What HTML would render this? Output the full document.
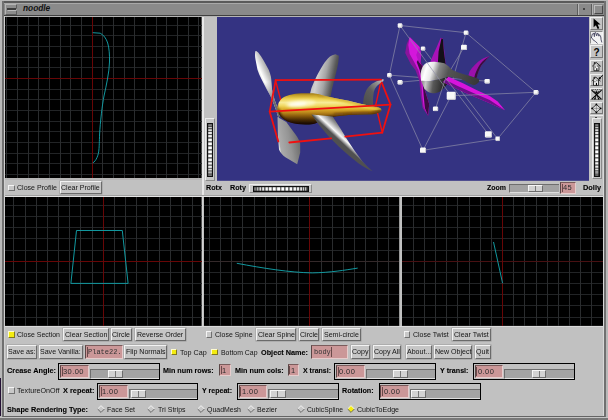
<!DOCTYPE html><html><head><meta charset="utf-8"><title>noodle</title><style>
html,body{margin:0;padding:0;overflow:hidden;}
body{width:608px;height:420px;overflow:hidden;background:#c1c1c1;position:relative;font-family:"Liberation Sans",sans-serif;font-size:7px;color:#000;}
div,span{position:absolute;box-sizing:border-box;white-space:nowrap;}
svg{position:absolute;display:block;}
.t{font-size:7.2px;line-height:8px;height:8px;color:#141414;}
.b{font-weight:bold;color:#000;-webkit-text-stroke:0.1px #000;}
.btn{background:#c6c6c6;border:1px solid;border-color:#f2f2f2 #6a6a6a #6a6a6a #f2f2f2;font-size:7.05px;line-height:11px;text-align:center;color:#141414;box-shadow:0 0 0 0.5px #9a9a9a;}
.bt{position:static;display:inline-block;transform:scale(1.0005);}
.fld{background:#cb9798;border:1px solid;border-color:#7a5c5c #e6cccc #e6cccc #5a4646;font-family:"Liberation Mono",monospace;font-size:7px;line-height:11px;color:#333;padding-left:2px;}
.fld.n{font-family:"Liberation Sans",sans-serif;font-size:7.5px;letter-spacing:0.42px;padding-left:2.4px;color:#2c2c2c;}
.chk{width:6.5px;height:6.5px;background:#c8c8c8;border:1px solid;border-color:#f4f4f4 #707070 #707070 #f4f4f4;}
.chk.y{background:#f4ec10;border-color:#fffbd0 #807820 #807820 #fffbd0;}
.box{border:1.3px solid #000;background:#c1c1c1;}
.trk{background:#a3a3a3;border-top:1px solid #6e6e6e;border-left:1px solid #6e6e6e;border-bottom:1px solid #dedede;}
.thm{background:#d2d2d2;border:1px solid;border-color:#f6f6f6 #6c6c6c #6c6c6c #f6f6f6;}
.thm i{position:absolute;left:50%;top:0;bottom:0;width:1px;background:#777;margin-left:-0.5px;}
</style></head><body><div style="left:0px;top:0px;width:608px;height:1px;background:#b8b8b8;"></div><div style="left:0px;top:1px;width:608px;height:2px;background:#5a5a5a;"></div><div style="left:0px;top:3px;width:608px;height:12px;background:#8a8a8a;"></div><div style="left:0px;top:3px;width:608px;height:1px;background:#a8a8a8;"></div><div style="left:0px;top:15px;width:608px;height:1px;background:#404040;"></div><div style="left:0px;top:16px;width:608px;height:1px;background:#b4b4b4;"></div><div style="left:0px;top:0px;width:1.5px;height:420px;background:#b8b8b8;"></div><div style="left:1.5px;top:1px;width:2.5px;height:419px;background:#707070;"></div><div style="left:4px;top:16px;width:1.3px;height:400px;background:#d0d0d0;"></div><div style="left:0px;top:378px;width:1px;height:38px;background:#241034;"></div><div style="left:603px;top:17px;width:1px;height:399px;background:#d8d8d8;"></div><div style="left:604px;top:1px;width:1.6px;height:417px;background:#707070;"></div><div style="left:605.6px;top:0px;width:2.4px;height:420px;background:#b8b8b8;"></div><div style="left:3px;top:415.5px;width:602px;height:1.5px;background:#646464;"></div><div style="left:0px;top:417px;width:608px;height:1px;background:#c4c4c4;"></div><div style="left:0px;top:418px;width:608px;height:2px;background:#787878;"></div><div style="left:4.5px;top:4px;width:12.5px;height:11px;background:#8c8c8c;border:1px solid;border-color:#b4b4b4 #5c5c5c #5c5c5c #b4b4b4;"></div><div style="left:6.5px;top:8px;width:9px;height:2px;background:#3c3c3c;box-shadow:0.6px 0.8px 0 #c8c8c8;"></div><div style="left:23px;top:3px;font:italic bold 8.3px/11px 'Liberation Sans',sans-serif;color:#101010;">noodle</div><div style="left:577.3px;top:4px;width:1px;height:11px;background:#5c5c5c;"></div><div style="left:578.3px;top:4px;width:1px;height:11px;background:#b4b4b4;"></div><div style="left:583px;top:8px;width:2.2px;height:2.2px;background:#2c2c2c;border-radius:1px;"></div><div style="left:590.5px;top:4px;width:1px;height:11px;background:#5c5c5c;"></div><div style="left:591.5px;top:4px;width:1px;height:11px;background:#b0b0b0;"></div><div style="left:594px;top:4.5px;width:8.5px;height:9px;background:#8c8c8c;border:1px solid;border-color:#bcbcbc #484848 #484848 #bcbcbc;"></div><svg style="left:5.3px;top:17px" width="196.6" height="161" viewBox="5.3 17 196.6 161"><rect x="5.3" y="17" width="196.6" height="161" fill="#000"/><path d="M5.3 25.10H201.9M5.3 35.78H201.9M5.3 46.46H201.9M5.3 57.14H201.9M5.3 67.82H201.9M5.3 89.18H201.9M5.3 99.86H201.9M5.3 110.54H201.9M5.3 121.22H201.9M5.3 131.90H201.9M5.3 142.58H201.9M5.3 153.26H201.9M5.3 163.94H201.9M5.3 174.62H201.9" stroke="#222426" stroke-width="1" fill="none" shape-rendering="crispEdges"/><path d="M7.06 17V178M17.74 17V178M28.42 17V178M39.10 17V178M49.78 17V178M60.46 17V178M71.14 17V178M81.82 17V178M103.18 17V178M113.86 17V178M124.54 17V178M135.22 17V178M145.90 17V178M156.58 17V178M167.26 17V178M177.94 17V178M188.62 17V178M199.30 17V178" stroke="#2a2c2e" stroke-width="1" fill="none" shape-rendering="crispEdges"/><path d="M5.3 78.5H201.9" stroke="#680606" stroke-width="1" shape-rendering="crispEdges"/><path d="M92.5 17V178" stroke="#680606" stroke-width="1" shape-rendering="crispEdges"/><path d="M93 32.7L100.5 33.2C104 35 106.5 38.5 108 43C109.5 48 110 55 109.8 62C109.6 72 106.5 86 104.3 96C102.5 105 100.6 122 99.9 134C99.6 142 99.6 146 99.2 150C98.8 155 96.5 161 93 163" stroke="#1299a0" stroke-width="1" fill="none" stroke-linejoin="round" shape-rendering="crispEdges"/></svg><svg style="left:5.3px;top:196.9px" width="196.6" height="128.9" viewBox="5.3 196.9 196.6 128.9"><rect x="5.3" y="196.9" width="196.6" height="128.9" fill="#000"/><path d="M5.3 205.35H201.9M5.3 216.52H201.9M5.3 227.69H201.9M5.3 238.86H201.9M5.3 250.03H201.9M5.3 272.37H201.9M5.3 283.54H201.9M5.3 294.71H201.9M5.3 305.88H201.9M5.3 317.05H201.9" stroke="#222426" stroke-width="1" fill="none" shape-rendering="crispEdges"/><path d="M14.24 196.9V325.8M25.41 196.9V325.8M36.58 196.9V325.8M47.75 196.9V325.8M58.92 196.9V325.8M70.09 196.9V325.8M81.26 196.9V325.8M92.43 196.9V325.8M114.77 196.9V325.8M125.94 196.9V325.8M137.11 196.9V325.8M148.28 196.9V325.8M159.45 196.9V325.8M170.62 196.9V325.8M181.79 196.9V325.8M192.96 196.9V325.8" stroke="#2a2c2e" stroke-width="1" fill="none" shape-rendering="crispEdges"/><path d="M5.3 261.2H201.9" stroke="#680606" stroke-width="1" shape-rendering="crispEdges"/><path d="M103.6 196.9V325.8" stroke="#680606" stroke-width="1" shape-rendering="crispEdges"/><path d="M76.8 230.4H122.6L128.4 283.3H71.2Z" stroke="#1299a0" stroke-width="1" fill="none" stroke-linejoin="round" shape-rendering="crispEdges"/></svg><svg style="left:203.7px;top:196.9px" width="195.6" height="128.9" viewBox="203.7 196.9 195.6 128.9"><rect x="203.7" y="196.9" width="195.6" height="128.9" fill="#000"/><path d="M203.7 205.35H399.3M203.7 216.52H399.3M203.7 227.69H399.3M203.7 238.86H399.3M203.7 250.03H399.3M203.7 272.37H399.3M203.7 283.54H399.3M203.7 294.71H399.3M203.7 305.88H399.3M203.7 317.05H399.3" stroke="#222426" stroke-width="1" fill="none" shape-rendering="crispEdges"/><path d="M209.17 196.9V325.8M220.34 196.9V325.8M231.51 196.9V325.8M242.68 196.9V325.8M253.85 196.9V325.8M265.02 196.9V325.8M276.19 196.9V325.8M287.36 196.9V325.8M298.53 196.9V325.8M320.87 196.9V325.8M332.04 196.9V325.8M343.21 196.9V325.8M354.38 196.9V325.8M365.55 196.9V325.8M376.72 196.9V325.8M387.89 196.9V325.8" stroke="#2a2c2e" stroke-width="1" fill="none" shape-rendering="crispEdges"/><path d="M203.7 261.2H399.3" stroke="#34292a" stroke-width="1" shape-rendering="crispEdges"/><path d="M309.7 196.9V325.8" stroke="#680606" stroke-width="1" shape-rendering="crispEdges"/><path d="M236.5 263.2C262 268 290 272.5 312 272.8C330 272.5 345 270 357.4 268" stroke="#1299a0" stroke-width="1" fill="none" stroke-linejoin="round" shape-rendering="crispEdges"/></svg><svg style="left:402px;top:196.9px" width="201" height="128.9" viewBox="402 196.9 201 128.9"><rect x="402" y="196.9" width="201" height="128.9" fill="#000"/><path d="M402 205.35H603M402 216.52H603M402 227.69H603M402 238.86H603M402 250.03H603M402 272.37H603M402 283.54H603M402 294.71H603M402 305.88H603M402 317.05H603" stroke="#222426" stroke-width="1" fill="none" shape-rendering="crispEdges"/><path d="M413.24 196.9V325.8M424.41 196.9V325.8M435.58 196.9V325.8M446.75 196.9V325.8M457.92 196.9V325.8M469.09 196.9V325.8M480.26 196.9V325.8M491.43 196.9V325.8M513.77 196.9V325.8M524.94 196.9V325.8M536.11 196.9V325.8M547.28 196.9V325.8M558.45 196.9V325.8M569.62 196.9V325.8M580.79 196.9V325.8M591.96 196.9V325.8" stroke="#2a2c2e" stroke-width="1" fill="none" shape-rendering="crispEdges"/><path d="M402 261.2H603" stroke="#481012" stroke-width="1" shape-rendering="crispEdges"/><path d="M502.6 196.9V325.8" stroke="#680606" stroke-width="1" shape-rendering="crispEdges"/><path d="M493.5 241.9L502.6 283.2" stroke="#1299a0" stroke-width="1" fill="none" stroke-linejoin="round" shape-rendering="crispEdges"/></svg><div style="left:202.3px;top:17px;width:1.7px;height:179px;background:#e8e8e8;"></div><div style="left:201.9px;top:196.9px;width:1px;height:128.9px;background:#d4d4d4;"></div><div style="left:399.3px;top:196.9px;width:1px;height:128.9px;background:#989898;"></div><div style="left:5px;top:194.9px;width:598px;height:1px;background:#a0a0a0;"></div><div style="left:5px;top:195.9px;width:598px;height:1px;background:#e4e4e4;"></div><div style="left:5px;top:325.8px;width:598px;height:1px;background:#dadada;"></div><div style="left:5px;top:178px;width:197px;height:1.5px;background:#b6b6b6;"></div><svg style="left:217.3px;top:17px" width="372" height="163.8" viewBox="217.3 17 372 163.8"><defs>
<linearGradient id="gb" x1="0" y1="0" x2="0.12" y2="1"><stop offset="0" stop-color="#d8a828"/><stop offset="0.12" stop-color="#f0cc40"/><stop offset="0.38" stop-color="#f8e070"/><stop offset="0.55" stop-color="#e0a820"/><stop offset="0.78" stop-color="#a06c10"/><stop offset="1" stop-color="#3c2404"/></linearGradient>
<radialGradient id="gh" cx="0.5" cy="0.5" r="0.5"><stop offset="0" stop-color="#fffff0" stop-opacity="0.95"/><stop offset="0.6" stop-color="#fff4a0" stop-opacity="0.5"/><stop offset="1" stop-color="#f8e070" stop-opacity="0"/></radialGradient>
<linearGradient id="f1" gradientUnits="userSpaceOnUse" x1="256" y1="72" x2="274" y2="64"><stop offset="0" stop-color="#d0d0d0"/><stop offset="0.22" stop-color="#ffffff"/><stop offset="0.5" stop-color="#c4c4c4"/><stop offset="0.8" stop-color="#8c8c8c"/><stop offset="1" stop-color="#6c6c6c"/></linearGradient>
<linearGradient id="f2" x1="0" y1="0.3" x2="1" y2="0.6"><stop offset="0" stop-color="#b0b0b0"/><stop offset="0.3" stop-color="#d0d0d0"/><stop offset="0.55" stop-color="#a4a4a4"/><stop offset="0.8" stop-color="#585858"/><stop offset="1" stop-color="#383838"/></linearGradient>
<linearGradient id="f3" x1="0.2" y1="1" x2="0.9" y2="0"><stop offset="0" stop-color="#4c4c4c"/><stop offset="0.5" stop-color="#5c5c5c"/><stop offset="0.8" stop-color="#909090"/><stop offset="1" stop-color="#c0c0c0"/></linearGradient>
<linearGradient id="f4" gradientUnits="userSpaceOnUse" x1="278" y1="140" x2="301" y2="136"><stop offset="0" stop-color="#ececec"/><stop offset="0.07" stop-color="#acacac"/><stop offset="0.5" stop-color="#949494"/><stop offset="1" stop-color="#646464"/></linearGradient>
<linearGradient id="f5" gradientUnits="userSpaceOnUse" x1="311.7" y1="114.5" x2="320.9" y2="104.6"><stop offset="0" stop-color="#505050"/><stop offset="0.1" stop-color="#8c8c8c"/><stop offset="0.3" stop-color="#f8f8f8"/><stop offset="0.5" stop-color="#c8c8c8"/><stop offset="0.75" stop-color="#8c8c8c"/><stop offset="1" stop-color="#5c5c5c"/></linearGradient>
<linearGradient id="pb" gradientUnits="userSpaceOnUse" x1="421" y1="66" x2="479" y2="84"><stop offset="0" stop-color="#c8c8c8"/><stop offset="0.1" stop-color="#ffffff"/><stop offset="0.2" stop-color="#e8e8e8"/><stop offset="0.3" stop-color="#868686"/><stop offset="0.46" stop-color="#545454"/><stop offset="1" stop-color="#363636"/></linearGradient><linearGradient id="pl" gradientUnits="userSpaceOnUse" x1="422" y1="84" x2="447" y2="88"><stop offset="0" stop-color="#909090"/><stop offset="0.15" stop-color="#c8c8c8"/><stop offset="0.45" stop-color="#585858"/><stop offset="1" stop-color="#181818"/></linearGradient>
<linearGradient id="pb2" x1="0" y1="0" x2="0" y2="1"><stop offset="0" stop-color="#000" stop-opacity="0"/><stop offset="0.55" stop-color="#000" stop-opacity="0"/><stop offset="1" stop-color="#000" stop-opacity="0.65"/></linearGradient>
<linearGradient id="p1" x1="0" y1="0" x2="1" y2="0"><stop offset="0" stop-color="#9018a8"/><stop offset="0.45" stop-color="#f418f4"/><stop offset="1" stop-color="#b814c8"/></linearGradient>
<linearGradient id="p4" x1="0" y1="0" x2="0.3" y2="1"><stop offset="0" stop-color="#e414e4"/><stop offset="0.55" stop-color="#d010d8"/><stop offset="1" stop-color="#500868"/></linearGradient>
<filter id="bl1" x="-20%" y="-50%" width="140%" height="200%"><feGaussianBlur stdDeviation="0.8"/></filter><filter id="bl2" x="-20%" y="-50%" width="140%" height="200%"><feGaussianBlur stdDeviation="1.4"/></filter><linearGradient id="f1b" gradientUnits="userSpaceOnUse" x1="0" y1="82" x2="0" y2="102"><stop offset="0" stop-color="#707070" stop-opacity="0"/><stop offset="1" stop-color="#6c6c6c" stop-opacity="1"/></linearGradient><linearGradient id="gb2" gradientUnits="userSpaceOnUse" x1="0" y1="93" x2="0" y2="125"><stop offset="0" stop-color="#987414"/><stop offset="0.08" stop-color="#c8a42c"/><stop offset="0.18" stop-color="#ecd050"/><stop offset="0.3" stop-color="#f8ec98"/><stop offset="0.4" stop-color="#f0d860"/><stop offset="0.5" stop-color="#dcb02c"/><stop offset="0.6" stop-color="#c08c1c"/><stop offset="0.72" stop-color="#885a0c"/><stop offset="0.85" stop-color="#442804"/><stop offset="1" stop-color="#100600"/></linearGradient></defs><rect x="217.3" y="17" width="372" height="163.8" fill="#343382"/><g stroke="#f01010" stroke-width="1.4" fill="none" stroke-linecap="round"><path d="M275.8 80.2L283.8 110.8M381.5 80L376 105.2L382.6 132.6"/></g><path d="M255.8 50.8C255 53.5 255.2 56.5 255.8 59.6L257.7 69.4C258.7 72.6 260 75.6 261.7 78.9L266.6 88.4L270.8 96L273.7 103L276.6 110.7L279 119L281 108L277.5 106.9L274.7 99.2L272.4 89.7L271.8 82.1C271.7 80 271.5 78.2 271.2 76.4C270.6 74 269.9 71.8 269 69.7L264.2 61.1C262.5 58 260.5 55 258.5 52.6C257.6 51.6 256.8 51 256 51Z" fill="url(#f1)"/><path d="M255.8 50.8C255 53.5 255.2 56.5 255.8 59.6L257.7 69.4C258.7 72.6 260 75.6 261.7 78.9L266.6 88.4L270.8 96L273.7 103L276.6 110.7L279 119L281 108L277.5 106.9L274.7 99.2L272.4 89.7L271.8 82.1C271.7 80 271.5 78.2 271.2 76.4C270.6 74 269.9 71.8 269 69.7L264.2 61.1C262.5 58 260.5 55 258.5 52.6C257.6 51.6 256.8 51 256 51Z" fill="url(#f1b)"/><path d="M335.8 54.2C333.5 54.8 331.5 55.5 330 56.7C327.5 59 325.5 61.5 323.3 65C320.5 69.5 318.5 73 316.7 76.7C314.5 81 313 85 311.7 88.3L310 95L330.8 97L332.5 88.3L335 78.3L337.5 68.3L338.7 61.7L339.2 55.8Z" fill="url(#f2)"/><path d="M383.8 79L378.3 80.8C375.5 82 373.5 83 371.7 84.2C369.5 86 368 88 366.7 90C365.5 92.3 364.8 94.5 364.2 96.7L363 105L373.3 107.5L373.3 100C373.5 96.5 373.7 94 374.2 91.7C375 89 376 87.2 377.5 85.8C379.3 84 381.5 82.5 383.8 81Z" fill="url(#f3)"/><path d="M277.8 117L278.2 134.6L279.3 149.4C280.5 152.5 283 155.2 285.7 157.3L297.5 164.2L300.5 152.4L300.5 143.5C299 139 296.5 135 293.6 131.6L286.6 122Z" fill="url(#f4)"/><clipPath id="bc"><path d="M277.9 106.7C278.3 103.5 279.8 101 281.8 98.8C284 96.8 286.5 95.7 289.7 94.9C293.5 94 297.5 93.5 301.6 93.3L313.4 93.3C317.5 93.8 321.5 94.8 325.3 95.9L337.1 98.4L348.9 100.8L360.8 103.7L372.6 106.3L379.5 107.7C381 108.2 381.8 108.9 381.7 109.9C381.5 111.2 380.7 112 379.5 112.6C377.5 113.5 375 114 372.6 114.2L360.8 114.6L348.9 115L337.1 116.2L329.2 117.6C324.5 119.5 320 121.8 315.4 123.5C313 124.2 310.2 124.5 307.5 124.5C304 124.6 300.8 124.4 297.6 124.1C294 123.5 290.8 122.7 287.8 121.5C285 120.2 282.7 118.6 280.9 116.6C279.5 115 278.7 113.3 278.3 111.6C278 110 277.8 108.3 277.9 106.7Z"/></clipPath><g clip-path="url(#bc)"><rect x="276" y="90" width="108" height="38" fill="url(#gb2)"/><path d="M325 97.5L337 100L360.8 105.2L381 109.3" stroke="#f0d850" stroke-width="2.6" fill="none" filter="url(#bl1)"/><path d="M318 95.4L337.1 98.6L360.8 103.9L381 108" stroke="#b88c1c" stroke-width="1.4" fill="none" filter="url(#bl1)"/><path d="M276.5 109C277.5 116.5 283 122.4 290 124.9C297 126.7 309 127 316 125.6C322 123.8 326 121.3 330 119.5L349 116.9L372.6 116.1L383 112" stroke="#140800" stroke-width="5" fill="none" filter="url(#bl2)"/><path d="M334 114.4L349 113.4L372 112.6L381 111.5" stroke="#7c4c08" stroke-width="2.4" fill="none" filter="url(#bl1)"/><path d="M277.5 100C277 104 277 110 278.5 115" stroke="#a87818" stroke-width="2.2" fill="none" filter="url(#bl1)"/><ellipse cx="301" cy="103.6" rx="15" ry="3.4" fill="#fffad0" opacity="0.8" filter="url(#bl2)" transform="rotate(-4 301 103.6)"/><ellipse cx="298" cy="104" rx="9" ry="1.7" fill="#ffffff" opacity="0.8" filter="url(#bl1)" transform="rotate(-5 298 104)"/></g><path d="M311.7 114.5L319.2 124.7L329 136.6L339 146.4L348.8 155.3L358.7 163.2C363 166.2 367.5 169 372.8 171.3C369 168 365.5 164.5 362.6 161.2L354.7 150.4L346.8 138.5L340.9 128.7L333 116.5Z" fill="url(#f5)"/><g stroke="#f01010" stroke-width="1.8" fill="none" stroke-linecap="round" stroke-linejoin="round"><path d="M276 80.1L381.3 79.7"/><path d="M276 80.1L270 111.7L278.6 141.5"/><path d="M382 82.5L390.8 104.6L382.6 132.6"/><path d="M270 111.7L390.8 104.6"/><path d="M289.6 142.5L331.5 138.4M345.6 136.7L382.6 132.6"/></g><path d="M453 80L466.3 32.7M453 80L497.9 138.8M453 80L389.6 75.1M400.3 25.5L466.3 32.7M466.3 32.7L536.3 92.3M389.6 75.1L400.3 25.5M446 78L423.3 48.5M446 78L464.3 47.3M446 78L400.3 82.2M446 78L487.5 81.2" stroke="#9090aa" stroke-width="0.68" fill="none"/><path d="M441 37.8L437 47L433 56L430 63.5L446 65L444.5 50L443 38.3Z" fill="#a812b8"/><path d="M441.8 38.3L438.9 51.4L438.1 64L446 65L444.2 51.4L443.2 39Z" fill="#141018"/><path d="M490 56C487 56.8 484.5 58 482 59.3C479.5 61 477.3 62.8 475.3 64.7C473 67 471.3 69 470 71.3L468.7 75.3L476.7 78.7L478 74C478.8 71.5 479.6 69.5 480.7 67.3C481.8 65.3 483 63.5 484.7 62C486.3 60 488 58 490 56Z" fill="#9c10ac"/><path d="M490 56C486 58.5 483 61 480.6 64C478.5 67 477 70 475.5 74L474.5 77.7L476.7 78.7L478 74C478.8 71.5 479.6 69.5 480.7 67.3C481.8 65.3 483 63.5 484.7 62C486.3 60 488 58 490 56Z" fill="#38103c"/><path d="M410 37L407 44L405.5 53L411 64L415.7 70L419.6 80.5L421 96.2L422.9 108L428.4 115.8L429.5 104L426.2 93.6L422.9 83.1L423 66L421 63L421.5 55L420 47Z" fill="#8a149c"/><path d="M410 37L408.6 45L410 54L414.5 62L418.6 70L421.4 80.5L422.6 96L424 107L428.4 115.8L429.5 104L426.2 93.6L422.9 83.1L423 66L421 63L421.5 55L420 47Z" fill="#d416dc"/><path d="M421.5 55L421.3 63L423 66L422.9 83.1L426.2 93.6L429.5 104L428.4 115.8L425.2 108L424 96L423 84L420 70L417 62Z" fill="#3c0c44"/><path d="M419.5 47L421.5 55L421 63L422.5 66L419 62L416.5 55Z" fill="#b414c4"/><path d="M421.3 80.7L424.7 88.7C426.5 91 429.5 92.8 432.7 93.3C435.5 93.4 438.3 92.8 440.7 91.3C442.8 89.8 444.6 88 446 86L448.7 82L448.7 76.7L440.7 78.7L430 81.3Z" fill="url(#pl)"/><path d="M421.3 80.7L420.9 74C421.2 71.5 421.8 69.2 422.7 67.3C423.8 65 425.3 63.5 427.3 62.7C430 61.8 433.5 61.6 436.7 62C439.5 62.2 442.3 62.6 444.7 63.3C447.5 65 450.2 67.6 452.7 70C456 71.6 459.7 73 463.3 74L472.7 76.7L478.7 78.7C479.5 79.7 479.6 80.9 479.3 82C478 83.5 476.2 84.6 474 85.3L468.7 83.3L460.7 78.7L448.7 76.7L440.7 78.7L430 81.3Z" fill="url(#pb)"/><path d="M448.7 76.7L463.3 83.3L476.7 90L490 96L498 101.5L505.3 110.2L490 103.3L470 94.7L456.7 88.7L443.3 82Z" fill="#d814dc"/><path d="M446 80L458 86L472 92.2L490 100L505.3 110.2L490 103.3L470 94.7L456.7 88.7L443.3 82Z" fill="#6c1088"/><path d="M451.5 95.8L400.3 25.5M451.5 95.8L536.3 92.3M451.5 95.8L423.3 150.3M536.3 92.3L497.9 138.8M497.9 138.8L423.3 150.3M423.3 150.3L389.6 75.1M446 78L435.8 108.8M446 78L488.7 134.3" stroke="#9090aa" stroke-width="0.68" fill="none"/><rect x="398" y="23.3" width="4.6" height="4.4" rx="1.2" fill="#f8f8f8"/><path d="M398.8 27.25H402.15V24.3" stroke="#c4c4cc" stroke-width="0.9" fill="none"/><rect x="464" y="30.5" width="4.6" height="4.4" rx="1.2" fill="#f8f8f8"/><path d="M464.8 34.45H468.15V31.5" stroke="#c4c4cc" stroke-width="0.9" fill="none"/><rect x="533.9" y="90.1" width="4.8" height="4.4" rx="1.2" fill="#f8f8f8"/><path d="M534.7 94.05H538.25V91.1" stroke="#c4c4cc" stroke-width="0.9" fill="none"/><rect x="495.7" y="136.6" width="4.4" height="4.4" rx="1.2" fill="#f8f8f8"/><path d="M496.5 140.55H499.65V137.6" stroke="#c4c4cc" stroke-width="0.9" fill="none"/><rect x="420.3" y="147.6" width="6" height="5.4" rx="1.2" fill="#f8f8f8"/><path d="M421.1 152.55H425.85V148.6" stroke="#c4c4cc" stroke-width="0.9" fill="none"/><rect x="387.4" y="72.9" width="4.4" height="4.4" rx="1.2" fill="#f8f8f8"/><path d="M388.2 76.85H391.35V73.9" stroke="#c4c4cc" stroke-width="0.9" fill="none"/><rect x="447" y="91.8" width="9" height="8" rx="1.2" fill="#f8f8f8"/><path d="M447.8 99.35H455.55V92.8" stroke="#c4c4cc" stroke-width="0.9" fill="none"/><rect x="397.8" y="80" width="5" height="4.4" rx="1.2" fill="#f8f8f8"/><path d="M398.6 83.95H402.35V81" stroke="#c4c4cc" stroke-width="0.9" fill="none"/><rect x="421.1" y="46.5" width="4.4" height="4" rx="1.2" fill="#f8f8f8"/><path d="M421.9 50.05H425.05V47.5" stroke="#c4c4cc" stroke-width="0.9" fill="none"/><rect x="461.3" y="44.7" width="6" height="5.2" rx="1.2" fill="#f8f8f8"/><path d="M462.1 49.45H466.85V45.7" stroke="#c4c4cc" stroke-width="0.9" fill="none"/><rect x="484.8" y="79" width="5.4" height="4.4" rx="1.2" fill="#f8f8f8"/><path d="M485.6 82.95H489.75V80" stroke="#c4c4cc" stroke-width="0.9" fill="none"/><rect x="433.2" y="106.5" width="5.2" height="4.6" rx="1.2" fill="#f8f8f8"/><path d="M434 110.65H437.95V107.5" stroke="#c4c4cc" stroke-width="0.9" fill="none"/><rect x="485.2" y="131.2" width="7" height="6.2" rx="1.2" fill="#f8f8f8"/><path d="M486 136.95H491.75V132.2" stroke="#c4c4cc" stroke-width="0.9" fill="none"/></svg><div style="left:205px;top:118.2px;width:9.9px;height:62.4px;background:#c8c8c8;border:1px solid;border-color:#ececec #8a8a8a #8a8a8a #ececec;"></div><svg style="left:207px;top:122.7px" width="6.1" height="54.1" viewBox="0 0 6.1 54.1" shape-rendering="crispEdges"><rect width="6.1" height="54.1" fill="#101010"/><rect x="1.2" y="1.34" width="3.70" height="0.65" fill="#a9a9a9" shape-rendering="auto"/><rect x="1.2" y="2.00" width="3.70" height="0.37" fill="#323232" shape-rendering="auto"/><rect x="1.2" y="2.37" width="3.70" height="1.08" fill="#bebebe" shape-rendering="auto"/><rect x="1.2" y="3.45" width="3.70" height="0.55" fill="#3f3f3f" shape-rendering="auto"/><rect x="1.2" y="4.00" width="3.70" height="1.48" fill="#d0d0d0" shape-rendering="auto"/><rect x="1.2" y="5.49" width="3.70" height="0.72" fill="#4c4c4c" shape-rendering="auto"/><rect x="1.2" y="6.20" width="3.70" height="1.85" fill="#dedede" shape-rendering="auto"/><rect x="1.2" y="8.05" width="3.70" height="0.86" fill="#585858" shape-rendering="auto"/><rect x="1.2" y="8.92" width="3.70" height="2.17" fill="#ebebeb" shape-rendering="auto"/><rect x="1.2" y="11.09" width="3.70" height="0.99" fill="#626262" shape-rendering="auto"/><rect x="1.2" y="12.08" width="3.70" height="2.44" fill="#f4f4f4" shape-rendering="auto"/><rect x="1.2" y="14.51" width="3.70" height="1.09" fill="#6a6a6a" shape-rendering="auto"/><rect x="1.2" y="15.61" width="3.70" height="2.64" fill="#fcfcfc" shape-rendering="auto"/><rect x="1.2" y="18.25" width="3.70" height="1.17" fill="#707070" shape-rendering="auto"/><rect x="1.2" y="19.42" width="3.70" height="2.79" fill="#ffffff" shape-rendering="auto"/><rect x="1.2" y="22.20" width="3.70" height="1.21" fill="#757575" shape-rendering="auto"/><rect x="1.2" y="23.42" width="3.70" height="2.86" fill="#ffffff" shape-rendering="auto"/><rect x="1.2" y="26.28" width="3.70" height="1.23" fill="#777777" shape-rendering="auto"/><rect x="1.2" y="27.51" width="3.70" height="2.86" fill="#ffffff" shape-rendering="auto"/><rect x="1.2" y="30.37" width="3.70" height="1.22" fill="#777777" shape-rendering="auto"/><rect x="1.2" y="31.58" width="3.70" height="2.79" fill="#ffffff" shape-rendering="auto"/><rect x="1.2" y="34.38" width="3.70" height="1.17" fill="#757575" shape-rendering="auto"/><rect x="1.2" y="35.55" width="3.70" height="2.66" fill="#fcfcfc" shape-rendering="auto"/><rect x="1.2" y="38.21" width="3.70" height="1.10" fill="#717171" shape-rendering="auto"/><rect x="1.2" y="39.31" width="3.70" height="2.46" fill="#f5f5f5" shape-rendering="auto"/><rect x="1.2" y="41.76" width="3.70" height="1.00" fill="#6b6b6b" shape-rendering="auto"/><rect x="1.2" y="42.76" width="3.70" height="2.19" fill="#ebebeb" shape-rendering="auto"/><rect x="1.2" y="44.95" width="3.70" height="0.88" fill="#626262" shape-rendering="auto"/><rect x="1.2" y="45.83" width="3.70" height="1.88" fill="#e0e0e0" shape-rendering="auto"/><rect x="1.2" y="47.70" width="3.70" height="0.73" fill="#585858" shape-rendering="auto"/><rect x="1.2" y="48.43" width="3.70" height="1.51" fill="#d1d1d1" shape-rendering="auto"/><rect x="1.2" y="49.95" width="3.70" height="0.57" fill="#4d4d4d" shape-rendering="auto"/><rect x="1.2" y="50.51" width="3.70" height="1.11" fill="#c0c0c0" shape-rendering="auto"/><rect x="1.2" y="51.63" width="3.70" height="0.39" fill="#404040" shape-rendering="auto"/><rect x="1.2" y="52.01" width="3.70" height="0.69" fill="#ababab" shape-rendering="auto"/></svg><div style="left:592.1px;top:118.3px;width:9.7px;height:60.7px;background:#c8c8c8;border:1px solid;border-color:#ececec #8a8a8a #8a8a8a #ececec;"></div><svg style="left:594.1px;top:122.6px" width="5.6" height="54" viewBox="0 0 5.6 54" shape-rendering="crispEdges"><rect width="5.6" height="54" fill="#101010"/><rect x="1.2" y="1.34" width="3.20" height="0.65" fill="#a9a9a9" shape-rendering="auto"/><rect x="1.2" y="1.99" width="3.20" height="0.37" fill="#323232" shape-rendering="auto"/><rect x="1.2" y="2.37" width="3.20" height="1.08" fill="#bebebe" shape-rendering="auto"/><rect x="1.2" y="3.45" width="3.20" height="0.55" fill="#3f3f3f" shape-rendering="auto"/><rect x="1.2" y="4.00" width="3.20" height="1.48" fill="#d0d0d0" shape-rendering="auto"/><rect x="1.2" y="5.48" width="3.20" height="0.72" fill="#4c4c4c" shape-rendering="auto"/><rect x="1.2" y="6.19" width="3.20" height="1.85" fill="#dedede" shape-rendering="auto"/><rect x="1.2" y="8.04" width="3.20" height="0.86" fill="#585858" shape-rendering="auto"/><rect x="1.2" y="8.90" width="3.20" height="2.17" fill="#ebebeb" shape-rendering="auto"/><rect x="1.2" y="11.07" width="3.20" height="0.99" fill="#626262" shape-rendering="auto"/><rect x="1.2" y="12.06" width="3.20" height="2.43" fill="#f4f4f4" shape-rendering="auto"/><rect x="1.2" y="14.49" width="3.20" height="1.09" fill="#6a6a6a" shape-rendering="auto"/><rect x="1.2" y="15.58" width="3.20" height="2.64" fill="#fcfcfc" shape-rendering="auto"/><rect x="1.2" y="18.22" width="3.20" height="1.17" fill="#707070" shape-rendering="auto"/><rect x="1.2" y="19.38" width="3.20" height="2.78" fill="#ffffff" shape-rendering="auto"/><rect x="1.2" y="22.16" width="3.20" height="1.21" fill="#757575" shape-rendering="auto"/><rect x="1.2" y="23.37" width="3.20" height="2.85" fill="#ffffff" shape-rendering="auto"/><rect x="1.2" y="26.23" width="3.20" height="1.23" fill="#777777" shape-rendering="auto"/><rect x="1.2" y="27.45" width="3.20" height="2.86" fill="#ffffff" shape-rendering="auto"/><rect x="1.2" y="30.31" width="3.20" height="1.21" fill="#777777" shape-rendering="auto"/><rect x="1.2" y="31.52" width="3.20" height="2.79" fill="#ffffff" shape-rendering="auto"/><rect x="1.2" y="34.31" width="3.20" height="1.17" fill="#757575" shape-rendering="auto"/><rect x="1.2" y="35.48" width="3.20" height="2.65" fill="#fcfcfc" shape-rendering="auto"/><rect x="1.2" y="38.13" width="3.20" height="1.10" fill="#717171" shape-rendering="auto"/><rect x="1.2" y="39.23" width="3.20" height="2.45" fill="#f5f5f5" shape-rendering="auto"/><rect x="1.2" y="41.68" width="3.20" height="1.00" fill="#6b6b6b" shape-rendering="auto"/><rect x="1.2" y="42.68" width="3.20" height="2.19" fill="#ebebeb" shape-rendering="auto"/><rect x="1.2" y="44.87" width="3.20" height="0.87" fill="#626262" shape-rendering="auto"/><rect x="1.2" y="45.74" width="3.20" height="1.87" fill="#e0e0e0" shape-rendering="auto"/><rect x="1.2" y="47.61" width="3.20" height="0.73" fill="#585858" shape-rendering="auto"/><rect x="1.2" y="48.34" width="3.20" height="1.51" fill="#d1d1d1" shape-rendering="auto"/><rect x="1.2" y="49.85" width="3.20" height="0.56" fill="#4d4d4d" shape-rendering="auto"/><rect x="1.2" y="50.42" width="3.20" height="1.11" fill="#c0c0c0" shape-rendering="auto"/><rect x="1.2" y="51.53" width="3.20" height="0.39" fill="#404040" shape-rendering="auto"/><rect x="1.2" y="51.92" width="3.20" height="0.69" fill="#ababab" shape-rendering="auto"/></svg><div style="left:249px;top:184.1px;width:62.5px;height:8.8px;background:#c8c8c8;border:1px solid;border-color:#ececec #8a8a8a #8a8a8a #ececec;"></div><svg style="left:253.2px;top:185.7px" width="55.7" height="5.9" viewBox="0 0 55.7 5.9" shape-rendering="crispEdges"><rect width="55.7" height="5.9" fill="#101010"/><rect y="1.2" x="1.35" height="3.50" width="0.67" fill="#a9a9a9" shape-rendering="auto"/><rect y="1.2" x="2.02" height="3.50" width="0.38" fill="#323232" shape-rendering="auto"/><rect y="1.2" x="2.40" height="3.50" width="1.12" fill="#bebebe" shape-rendering="auto"/><rect y="1.2" x="3.52" height="3.50" width="0.57" fill="#3f3f3f" shape-rendering="auto"/><rect y="1.2" x="4.09" height="3.50" width="1.53" fill="#d0d0d0" shape-rendering="auto"/><rect y="1.2" x="5.62" height="3.50" width="0.74" fill="#4c4c4c" shape-rendering="auto"/><rect y="1.2" x="6.36" height="3.50" width="1.91" fill="#dedede" shape-rendering="auto"/><rect y="1.2" x="8.26" height="3.50" width="0.89" fill="#585858" shape-rendering="auto"/><rect y="1.2" x="9.16" height="3.50" width="2.24" fill="#ebebeb" shape-rendering="auto"/><rect y="1.2" x="11.39" height="3.50" width="1.02" fill="#626262" shape-rendering="auto"/><rect y="1.2" x="12.41" height="3.50" width="2.51" fill="#f4f4f4" shape-rendering="auto"/><rect y="1.2" x="14.93" height="3.50" width="1.13" fill="#6a6a6a" shape-rendering="auto"/><rect y="1.2" x="16.05" height="3.50" width="2.73" fill="#fcfcfc" shape-rendering="auto"/><rect y="1.2" x="18.78" height="3.50" width="1.20" fill="#707070" shape-rendering="auto"/><rect y="1.2" x="19.98" height="3.50" width="2.87" fill="#ffffff" shape-rendering="auto"/><rect y="1.2" x="22.85" height="3.50" width="1.25" fill="#757575" shape-rendering="auto"/><rect y="1.2" x="24.10" height="3.50" width="2.95" fill="#ffffff" shape-rendering="auto"/><rect y="1.2" x="27.05" height="3.50" width="1.27" fill="#777777" shape-rendering="auto"/><rect y="1.2" x="28.32" height="3.50" width="2.95" fill="#ffffff" shape-rendering="auto"/><rect y="1.2" x="31.27" height="3.50" width="1.25" fill="#777777" shape-rendering="auto"/><rect y="1.2" x="32.52" height="3.50" width="2.88" fill="#ffffff" shape-rendering="auto"/><rect y="1.2" x="35.40" height="3.50" width="1.21" fill="#757575" shape-rendering="auto"/><rect y="1.2" x="36.61" height="3.50" width="2.74" fill="#fcfcfc" shape-rendering="auto"/><rect y="1.2" x="39.35" height="3.50" width="1.13" fill="#717171" shape-rendering="auto"/><rect y="1.2" x="40.48" height="3.50" width="2.53" fill="#f5f5f5" shape-rendering="auto"/><rect y="1.2" x="43.02" height="3.50" width="1.03" fill="#6b6b6b" shape-rendering="auto"/><rect y="1.2" x="44.05" height="3.50" width="2.26" fill="#ebebeb" shape-rendering="auto"/><rect y="1.2" x="46.31" height="3.50" width="0.90" fill="#626262" shape-rendering="auto"/><rect y="1.2" x="47.21" height="3.50" width="1.93" fill="#e0e0e0" shape-rendering="auto"/><rect y="1.2" x="49.14" height="3.50" width="0.75" fill="#585858" shape-rendering="auto"/><rect y="1.2" x="49.89" height="3.50" width="1.56" fill="#d1d1d1" shape-rendering="auto"/><rect y="1.2" x="51.46" height="3.50" width="0.58" fill="#4d4d4d" shape-rendering="auto"/><rect y="1.2" x="52.04" height="3.50" width="1.15" fill="#c0c0c0" shape-rendering="auto"/><rect y="1.2" x="53.19" height="3.50" width="0.40" fill="#404040" shape-rendering="auto"/><rect y="1.2" x="53.59" height="3.50" width="0.71" fill="#ababab" shape-rendering="auto"/></svg><div style="left:589.8px;top:115.1px;width:13.2px;height:0.9px;background:#ececec;"></div><div style="left:594.8px;top:116.8px;width:2.4px;height:1px;background:#404040;"></div><div style="left:589.8px;top:17.4px;width:13.2px;height:12.8px;background:#c4c4c4;border:1px solid;border-color:#f0f0f0 #787878 #787878 #f0f0f0;"></div><svg style="left:589.8px;top:17.4px" width="13.2" height="12.8" viewBox="0 0 13.2 12.8"><path d="M3.6 1.6L3.6 10.2L5.9 8.2L7.7 12L9.3 11.3L7.6 7.6L10.6 7.4Z" fill="#000"/></svg><div style="left:589.8px;top:31.3px;width:13.2px;height:12.8px;background:#eeeeee;border:1px solid;border-color:#8a8a8a #f4f4f4 #f4f4f4 #8a8a8a;"></div><svg style="left:589.8px;top:31.3px" width="13.2" height="12.8" viewBox="0 0 13.2 12.8"><path d="M1.5 6.5L2.3 3.1L3.8 2.3L4.4 5.6L4.6 2L5.6 1.5L6.6 4.6L7.2 2.4L8.2 2.6L8.8 5L9.4 3.8L10.2 4.4L10.8 6L11.1 8.8L11.8 11.1L7.3 12.2L5.3 10.3L3 8.8Z" fill="#f4f4f4" stroke="none"/><path d="M1.5 6.5L2.3 3.1L3.8 2.3L4.4 5.6M4.6 4.4L4.6 2L5.6 1.5L6.6 4.6M7 4.2L7.2 2.4L8.2 2.6L8.8 5M9.2 4.6L9.4 3.8L10.2 4.4L10.8 6L11.1 8.8L11.8 11.1M1.5 6.5L3 8.8L5.3 10.3L7.3 12.2" fill="none" stroke="#30304c" stroke-width="0.8" stroke-linejoin="round" stroke-linecap="round"/></svg><div style="left:589.8px;top:45.4px;width:13.2px;height:12.8px;background:#c4c4c4;border:1px solid;border-color:#f0f0f0 #787878 #787878 #f0f0f0;"></div><svg style="left:589.8px;top:45.4px" width="13.2" height="12.8" viewBox="0 0 13.2 12.8"><text x="6.6" y="10.6" font-family="Liberation Sans,sans-serif" font-weight="bold" font-size="10" text-anchor="middle" fill="#000">?</text></svg><div style="left:589.8px;top:59.7px;width:13.2px;height:12.8px;background:#c4c4c4;border:1px solid;border-color:#f0f0f0 #787878 #787878 #f0f0f0;"></div><svg style="left:589.8px;top:59.7px" width="13.2" height="12.8" viewBox="0 0 13.2 12.8"><path d="M3.9 5.8V10.7H8.9V5.4Z" fill="#f0f0f0"/><path d="M2.2 6.3L6.2 2.4L10.9 6.5M3.9 5.4V10.7H8.9V5.2M4.3 4.2V2.5H5.1V3.4" fill="none" stroke="#000" stroke-width="0.75"/><rect x="6.3" y="8.2" width="1.1" height="2.4" fill="#000"/><rect x="4.9" y="6.6" width="0.9" height="0.9" fill="#000"/><rect x="6.9" y="5.6" width="0.9" height="0.9" fill="#000"/></svg><div style="left:589.8px;top:73.6px;width:13.2px;height:12.8px;background:#c4c4c4;border:1px solid;border-color:#f0f0f0 #787878 #787878 #f0f0f0;"></div><svg style="left:589.8px;top:73.6px" width="13.2" height="12.8" viewBox="0 0 13.2 12.8"><g transform="translate(-0.4,0.7)"><path d="M3.9 5.8V10.7H8.9V5.4Z" fill="#f0f0f0"/><path d="M2.2 6.3L6.2 2.4L10.9 6.5M3.9 5.4V10.7H8.9V5.2M4.3 4.2V2.5H5.1V3.4" fill="none" stroke="#000" stroke-width="0.75"/><rect x="6.3" y="8.2" width="1.1" height="2.4" fill="#000"/><rect x="4.9" y="6.6" width="0.9" height="0.9" fill="#000"/><rect x="6.9" y="5.6" width="0.9" height="0.9" fill="#000"/></g><path d="M12.6 1.2L9.4 4.6" stroke="#000" stroke-width="1" fill="none"/><path d="M8.6 5.6L9 2.8L11.2 5Z" fill="#000"/></svg><div style="left:589.8px;top:87.6px;width:13.2px;height:12.8px;background:#c4c4c4;border:1px solid;border-color:#f0f0f0 #787878 #787878 #f0f0f0;"></div><svg style="left:589.8px;top:87.6px" width="13.2" height="12.8" viewBox="0 0 13.2 12.8"><path d="M1.6 2.2L11.4 11.2M11.6 2.2L1.8 11.2" stroke="#000" stroke-width="1.1" fill="none"/><path d="M6.6 5L6.6 2.6M4.6 3L6.2 6M8.6 3L7 6M4.8 11.4L6 7.6M8.8 11.4L7.2 7.6" stroke="#000" stroke-width="0.8" fill="none"/><path d="M1.6 1.6H11.6" stroke="#000" stroke-width="0.7" stroke-dasharray="0.9 0.9" fill="none"/><circle cx="5" cy="10.8" r="0.8" fill="#000"/><circle cx="8.6" cy="10.8" r="0.8" fill="#000"/><circle cx="6.6" cy="4.6" r="0.8" fill="#000"/></svg><div style="left:589.8px;top:101.6px;width:13.2px;height:12.8px;background:#c4c4c4;border:1px solid;border-color:#f0f0f0 #787878 #787878 #f0f0f0;"></div><svg style="left:589.8px;top:101.6px" width="13.2" height="12.8" viewBox="0 0 13.2 12.8"><path d="M6.4 2.5L10.7 6.4L6.4 10.4L2.1 6.4Z" fill="#dcdcdc" stroke="#000" stroke-width="0.7"/><path d="M6.4 2.5V10.4M2.1 6.4H10.7" stroke="#666" stroke-width="0.5"/><circle cx="6.4" cy="2.4" r="0.9" fill="#000"/><circle cx="10.7" cy="6.4" r="0.9" fill="#000"/><circle cx="6.4" cy="10.4" r="0.9" fill="#000"/><circle cx="2.1" cy="6.4" r="0.9" fill="#000"/></svg><div class="chk" style="left:8px;top:184.6px;"></div><div class="t" style="left:16.8px;top:184.3px;transform-origin:0 0;transform:scaleX(0.9816);">Close Profile</div><div class="btn" style="left:60px;top:181px;width:41.7px;height:13px;line-height:11px;"><span class="bt">Clear Profile</span></div><div class="t b" style="left:206px;top:184.3px;transform-origin:0 0;transform:scaleX(1.0010);">Rotx</div><div class="t b" style="left:230px;top:184.3px;transform-origin:0 0;transform:scaleX(1.0010);">Roty</div><div class="t b" style="left:487px;top:184.3px;transform-origin:0 0;transform:scaleX(0.9712);">Zoom</div><div class="t b" style="left:583.4px;top:184.3px;transform-origin:0 0;transform:scaleX(1.0297);">Dolly</div><div class="trk" style="left:509px;top:183.6px;width:50px;height:9.3px;"></div><div class="thm" style="left:528.4px;top:184.6px;width:14.6px;height:7.6px;"><i></i></div><div class="fld n" style="left:560px;top:181.6px;width:15.8px;height:12px;line-height:10.5px;"><span class="bt">45</span><i style="position:absolute;left:1.4px;top:1px;bottom:1px;width:0.7px;background:#6a4a4a;"></i></div><div class="chk y" style="left:8px;top:331.3px;"></div><div class="t" style="left:17px;top:331.3px;transform-origin:0 0;transform:scaleX(0.9694);">Close Section</div><div class="btn" style="left:63px;top:328px;width:45.7px;height:13.3px;line-height:11.3px;"><span class="bt">Clear Section</span></div><div class="btn" style="left:111px;top:328px;width:21px;height:13.3px;line-height:11.3px;"><span class="bt">Circle</span></div><div class="btn" style="left:134.5px;top:328px;width:51px;height:13.3px;line-height:11.3px;"><span class="bt">Reverse Order</span></div><div class="chk" style="left:205.7px;top:331.3px;"></div><div class="t" style="left:215px;top:331.3px;transform-origin:0 0;transform:scaleX(0.9674);">Close Spine</div><div class="btn" style="left:256px;top:328px;width:40px;height:13.3px;line-height:11.3px;"><span class="bt">Clear Spine</span></div><div class="btn" style="left:298.7px;top:328px;width:20px;height:13.3px;line-height:11.3px;"><span class="bt">Circle</span></div><div class="btn" style="left:321.7px;top:328px;width:39.3px;height:13.3px;line-height:11.3px;"><span class="bt">Semi-circle</span></div><div class="chk" style="left:403.7px;top:331.3px;"></div><div class="t" style="left:413px;top:331.3px;transform-origin:0 0;transform:scaleX(0.9747);">Close Twist</div><div class="btn" style="left:452px;top:328px;width:39px;height:13.3px;line-height:11.3px;"><span class="bt">Clear Twist</span></div><div class="btn" style="left:6.7px;top:345.3px;width:30px;height:13.6px;line-height:11.6px;"><span class="bt">Save as:</span></div><div class="btn" style="left:39px;top:345.3px;width:43.5px;height:13.6px;line-height:11.6px;"><span class="bt">Save Vanilla:</span></div><div class="fld" style="left:85px;top:345px;width:37.5px;height:13.9px;line-height:12.4px;"><span class="bt">Plate22.</span><i style="position:absolute;left:1px;top:1px;bottom:1px;width:0.7px;background:#6a4a4a;"></i></div><div class="btn" style="left:124.4px;top:345.3px;width:42.4px;height:13.6px;line-height:11.6px;"><span class="bt">Flip Normals</span></div><div class="chk y" style="left:170.7px;top:348.7px;"></div><div class="t" style="left:180px;top:348.8px;transform-origin:0 0;transform:scaleX(0.9970);">Top Cap</div><div class="chk y" style="left:211px;top:348.7px;"></div><div class="t" style="left:220.5px;top:348.8px;transform-origin:0 0;transform:scaleX(0.9617);">Bottom Cap</div><div class="t b" style="left:261px;top:348.8px;transform-origin:0 0;transform:scaleX(1.0142);">Object Name:</div><div class="fld" style="left:311px;top:345px;width:36.5px;height:13.9px;line-height:12.4px;"><span class="bt">body</span><i style="position:absolute;left:18.6px;top:1px;bottom:1px;width:0.7px;background:#6a4a4a;"></i></div><div class="btn" style="left:350.5px;top:345.3px;width:19px;height:13.6px;line-height:11.6px;"><span class="bt">Copy</span></div><div class="btn" style="left:372.5px;top:345.3px;width:28.2px;height:13.6px;line-height:11.6px;"><span class="bt">Copy All</span></div><div class="btn" style="left:406px;top:345.3px;width:25.7px;height:13.6px;line-height:11.6px;"><span class="bt">About...</span></div><div class="btn" style="left:434px;top:345.3px;width:37.7px;height:13.6px;line-height:11.6px;"><span class="bt">New Object</span></div><div class="btn" style="left:475px;top:345.3px;width:15.5px;height:13.6px;line-height:11.6px;"><span class="bt">Quit</span></div><div class="t b" style="left:7px;top:366.8px;transform-origin:0 0;transform:scaleX(1.0192);">Crease Angle:</div><div class="box" style="left:58.3px;top:363px;width:102.2px;height:17px;"></div><div class="fld n" style="left:60px;top:364.8px;width:28.7px;height:13.6px;line-height:12.1px;"><span class="bt">30.00</span><i style="position:absolute;left:0.8px;top:1px;bottom:1px;width:0.7px;background:#6a4a4a;"></i></div><div class="trk" style="left:89.5px;top:369px;width:69.6px;height:9.8px;"></div><div class="thm" style="left:108.4px;top:370.1px;width:14.4px;height:7.9px;"><i></i></div><div class="t b" style="left:163px;top:366.8px;transform-origin:0 0;transform:scaleX(0.9996);">Min num rows:</div><div class="fld n" style="left:219px;top:363.7px;width:12px;height:12.7px;line-height:11.2px;"><span class="bt">1</span><i style="position:absolute;left:0.8px;top:1px;bottom:1px;width:0.7px;background:#6a4a4a;"></i></div><div class="t b" style="left:235px;top:366.8px;transform-origin:0 0;transform:scaleX(1.0077);">Min num cols:</div><div class="fld n" style="left:287.5px;top:363.7px;width:11.5px;height:12.7px;line-height:11.2px;"><span class="bt">1</span><i style="position:absolute;left:0.8px;top:1px;bottom:1px;width:0.7px;background:#6a4a4a;"></i></div><div class="t b" style="left:303px;top:366.8px;transform-origin:0 0;transform:scaleX(0.9734);">X transl:</div><div class="box" style="left:334.3px;top:363px;width:102.2px;height:17px;"></div><div class="fld n" style="left:336px;top:364.8px;width:28.7px;height:13.6px;line-height:12.1px;"><span class="bt">0.00</span><i style="position:absolute;left:0.8px;top:1px;bottom:1px;width:0.7px;background:#6a4a4a;"></i></div><div class="trk" style="left:365.5px;top:369px;width:69.6px;height:9.8px;"></div><div class="thm" style="left:393px;top:370.1px;width:14.5px;height:7.9px;"><i></i></div><div class="t b" style="left:439.5px;top:366.8px;transform-origin:0 0;transform:scaleX(0.9951);">Y transl:</div><div class="box" style="left:473px;top:363px;width:102.2px;height:17px;"></div><div class="fld n" style="left:474.7px;top:364.8px;width:28.7px;height:13.6px;line-height:12.1px;"><span class="bt">0.00</span><i style="position:absolute;left:0.8px;top:1px;bottom:1px;width:0.7px;background:#6a4a4a;"></i></div><div class="trk" style="left:504.2px;top:369px;width:69.6px;height:9.8px;"></div><div class="thm" style="left:531.7px;top:370.1px;width:14.8px;height:7.9px;"><i></i></div><div class="chk" style="left:8px;top:387.3px;"></div><div class="t" style="left:17px;top:386.8px;transform-origin:0 0;transform:scaleX(0.9971);">TextureOnOff</div><div class="t b" style="left:63px;top:386.8px;transform-origin:0 0;transform:scaleX(1.0239);">X repeat:</div><div class="box" style="left:97.3px;top:383px;width:101.2px;height:17px;"></div><div class="fld n" style="left:99px;top:384.8px;width:28.7px;height:13.6px;line-height:12.1px;"><span class="bt">1.00</span><i style="position:absolute;left:0.8px;top:1px;bottom:1px;width:0.7px;background:#6a4a4a;"></i></div><div class="trk" style="left:128.5px;top:389px;width:68.6px;height:9.8px;"></div><div class="thm" style="left:130.5px;top:390.1px;width:15.5px;height:7.9px;"><i></i></div><div class="t b" style="left:202px;top:386.8px;transform-origin:0 0;transform:scaleX(0.9791);">Y repeat:</div><div class="box" style="left:237px;top:383px;width:102.2px;height:17px;"></div><div class="fld n" style="left:238.7px;top:384.8px;width:28.7px;height:13.6px;line-height:12.1px;"><span class="bt">1.00</span><i style="position:absolute;left:0.8px;top:1px;bottom:1px;width:0.7px;background:#6a4a4a;"></i></div><div class="trk" style="left:268.2px;top:389px;width:69.6px;height:9.8px;"></div><div class="thm" style="left:270px;top:390.1px;width:15.7px;height:7.9px;"><i></i></div><div class="t b" style="left:342px;top:386.8px;transform-origin:0 0;transform:scaleX(1.0049);">Rotation:</div><div class="box" style="left:378.7px;top:383px;width:102.3px;height:17px;"></div><div class="fld n" style="left:380.4px;top:384.8px;width:28.7px;height:13.6px;line-height:12.1px;"><span class="bt">0.00</span><i style="position:absolute;left:0.8px;top:1px;bottom:1px;width:0.7px;background:#6a4a4a;"></i></div><div class="trk" style="left:409.9px;top:389px;width:69.7px;height:9.8px;"></div><div class="thm" style="left:411px;top:390.1px;width:15px;height:7.9px;"><i></i></div><div class="t b" style="left:7px;top:405.8px;transform-origin:0 0;transform:scaleX(1.0157);">Shape Rendering Type:</div><svg style="left:96.8px;top:405.3px" width="8" height="8" viewBox="0 0 8 8"><path d="M0.6 4L4 0.6L7.4 4L4 7.4Z" fill="#c8c8c8"/><path d="M0.6 4L4 0.6L7.4 4" stroke="#f8f8f8" stroke-width="0.9" fill="none"/><path d="M7.4 4L4 7.4L0.6 4" stroke="#606060" stroke-width="0.9" fill="none"/></svg><div class="t" style="left:107px;top:405.8px;transform-origin:0 0;transform:scaleX(0.9734);">Face Set</div><svg style="left:147.3px;top:405.3px" width="8" height="8" viewBox="0 0 8 8"><path d="M0.6 4L4 0.6L7.4 4L4 7.4Z" fill="#c8c8c8"/><path d="M0.6 4L4 0.6L7.4 4" stroke="#f8f8f8" stroke-width="0.9" fill="none"/><path d="M7.4 4L4 7.4L0.6 4" stroke="#606060" stroke-width="0.9" fill="none"/></svg><div class="t" style="left:157.5px;top:405.8px;transform-origin:0 0;transform:scaleX(0.9654);">Tri Strips</div><svg style="left:197.3px;top:405.3px" width="8" height="8" viewBox="0 0 8 8"><path d="M0.6 4L4 0.6L7.4 4L4 7.4Z" fill="#c8c8c8"/><path d="M0.6 4L4 0.6L7.4 4" stroke="#f8f8f8" stroke-width="0.9" fill="none"/><path d="M7.4 4L4 7.4L0.6 4" stroke="#606060" stroke-width="0.9" fill="none"/></svg><div class="t" style="left:207px;top:405.8px;transform-origin:0 0;transform:scaleX(0.9667);">QuadMesh</div><svg style="left:246.8px;top:405.3px" width="8" height="8" viewBox="0 0 8 8"><path d="M0.6 4L4 0.6L7.4 4L4 7.4Z" fill="#c8c8c8"/><path d="M0.6 4L4 0.6L7.4 4" stroke="#f8f8f8" stroke-width="0.9" fill="none"/><path d="M7.4 4L4 7.4L0.6 4" stroke="#606060" stroke-width="0.9" fill="none"/></svg><div class="t" style="left:256.7px;top:405.8px;transform-origin:0 0;transform:scaleX(0.9816);">Bezier</div><svg style="left:296.8px;top:405.3px" width="8" height="8" viewBox="0 0 8 8"><path d="M0.6 4L4 0.6L7.4 4L4 7.4Z" fill="#c8c8c8"/><path d="M0.6 4L4 0.6L7.4 4" stroke="#f8f8f8" stroke-width="0.9" fill="none"/><path d="M7.4 4L4 7.4L0.6 4" stroke="#606060" stroke-width="0.9" fill="none"/></svg><div class="t" style="left:307px;top:405.8px;transform-origin:0 0;transform:scaleX(0.9385);">CubicSpline</div><svg style="left:346.8px;top:405.3px" width="8" height="8" viewBox="0 0 8 8"><path d="M0.6 4L4 0.6L7.4 4L4 7.4Z" fill="#f4ec10"/><path d="M0.6 4L4 0.6L7.4 4" stroke="#f8f8f8" stroke-width="0.9" fill="none"/><path d="M7.4 4L4 7.4L0.6 4" stroke="#606060" stroke-width="0.9" fill="none"/></svg><div class="t" style="left:356.7px;top:405.8px;transform-origin:0 0;transform:scaleX(0.9821);">CubicToEdge</div></body></html>
